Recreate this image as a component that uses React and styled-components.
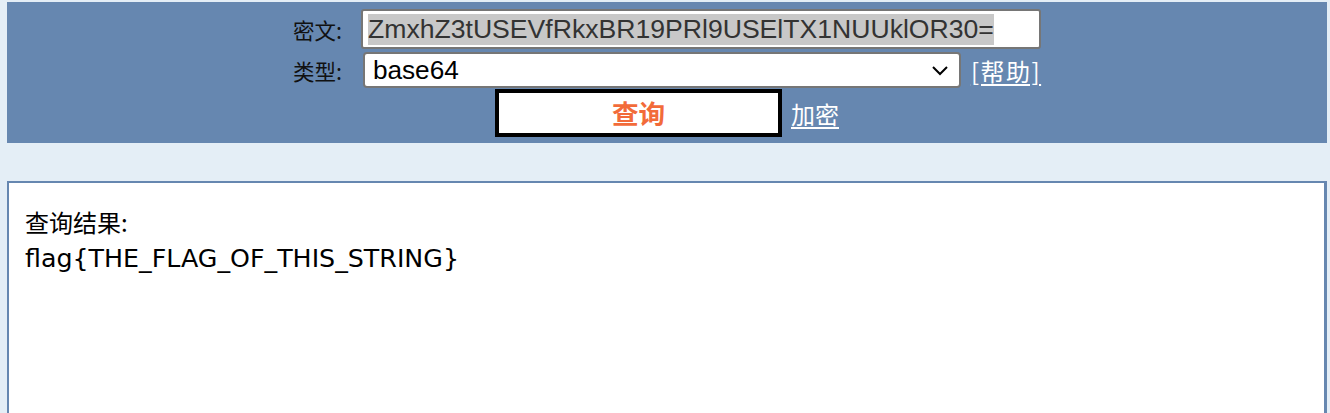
import React from "react";
import styled, { createGlobalStyle } from "styled-components";

const Global = createGlobalStyle`
  html, body { margin: 0; padding: 0; background: #e4eef6; overflow: hidden; }
  body { font-family: "Liberation Sans", "Noto Sans CJK SC", sans-serif; }
`;

const Page = styled.div`
  padding: 2px 3px 0 7px;
`;

const Panel = styled.form`
  background: #6687b0;
  padding: 7px 0 6px;
  display: flex;
  flex-direction: column;
  align-items: center;
`;

const Row = styled.div`
  display: flex;
  align-items: center;
  gap: ${(p) => p.$gap || 10}px;
  height: ${(p) => p.$h}px;
  margin-top: ${(p) => p.$mt || 0}px;
`;

const Label = styled.span`
  font-family: "Noto Sans CJK SC", sans-serif;
  font-size: 21.5px;
  color: #111;
  width: 57px;
  margin-right: ${(p) => p.$mr || 0}px;
  white-space: nowrap;
`;

const FakeInput = styled.div`
  box-sizing: border-box;
  width: 680px;
  height: 40px;
  border: 2px solid #767676;
  border-radius: 3px;
  background: #fff;
  display: flex;
  align-items: center;
  padding-left: 5px;
  font-family: "Liberation Sans", sans-serif;
  font-size: 26.6px;
  color: #333;
`;

const Selected = styled.span`
  background: #c8c8c8;
  line-height: 31px;
`;

const SelectBox = styled.div`
  box-sizing: border-box;
  width: 598px;
  height: 36px;
  border: 2px solid #767676;
  border-radius: 4px;
  background: #fff;
  display: flex;
  align-items: center;
  justify-content: space-between;
  padding: 0 10px 0 8px;
  font-family: "Liberation Sans", sans-serif;
  font-size: 26.2px;
  color: #000;
`;

const LinkText = styled.a`
  font-family: "Noto Sans CJK SC", sans-serif;
  font-size: 24px;
  letter-spacing: ${(p) => p.$ls || 0}px;
  color: #fff;
  text-decoration: underline;
  text-underline-offset: 3px;
  cursor: pointer;
  white-space: nowrap;
`;

const QueryButton = styled.button`
  box-sizing: border-box;
  width: 287px;
  height: 48px;
  border: 4px solid #000;
  background: #fff;
  color: #f26b3a;
  font-family: "Noto Sans CJK SC", sans-serif;
  font-weight: 700;
  font-size: 26.6px;
  line-height: 1;
  padding: 0;
  margin: 0;
`;

const Result = styled.div`
  margin-top: 38px;
  border: 2px solid #6687b0;
  border-right-width: 3px;
  background: #fff;
  height: 260px;
  padding: 20px 16px;
  font-family: "DejaVu Sans", "Noto Sans CJK SC", sans-serif;
  font-size: 25.3px;
  line-height: 37px;
  color: #000;
`;

const ResultLine = styled.div`
  font-family: ${(p) => (p.$cjk ? '"Noto Sans CJK SC", sans-serif' : 'inherit')};
  font-size: ${(p) => (p.$cjk ? '24px' : 'inherit')};
`;

export default function App() {
  return (
    <>
      <Global />
      <Page>
        <Panel onSubmit={(e) => e.preventDefault()}>
          <Row $h={40} $gap={11}>
            <Label>密文:</Label>
            <FakeInput>
              <Selected>ZmxhZ3tUSEVfRkxBR19PRl9USElTX1NUUklOR30=</Selected>
            </FakeInput>
          </Row>
          <Row $h={36} $mt={3} $gap={10}>
            <Label $mr={3}>类型:</Label>
            <SelectBox>
              <span>base64</span>
              <svg width="18" height="11" viewBox="0 0 18 11">
                <path d="M2 2 L9 9 L16 2" fill="none" stroke="#000" strokeWidth="2" />
              </svg>
            </SelectBox>
            <LinkText $ls={1.5}>[帮助]</LinkText>
          </Row>
          <Row $h={48} $mt={1} $gap={9}>
            <QueryButton type="submit">查询</QueryButton>
            <LinkText>加密</LinkText>
          </Row>
        </Panel>
        <Result>
          <ResultLine $cjk>查询结果:</ResultLine>
          <ResultLine>flag{"{"}THE_FLAG_OF_THIS_STRING{"}"}</ResultLine>
        </Result>
      </Page>
    </>
  );
}
